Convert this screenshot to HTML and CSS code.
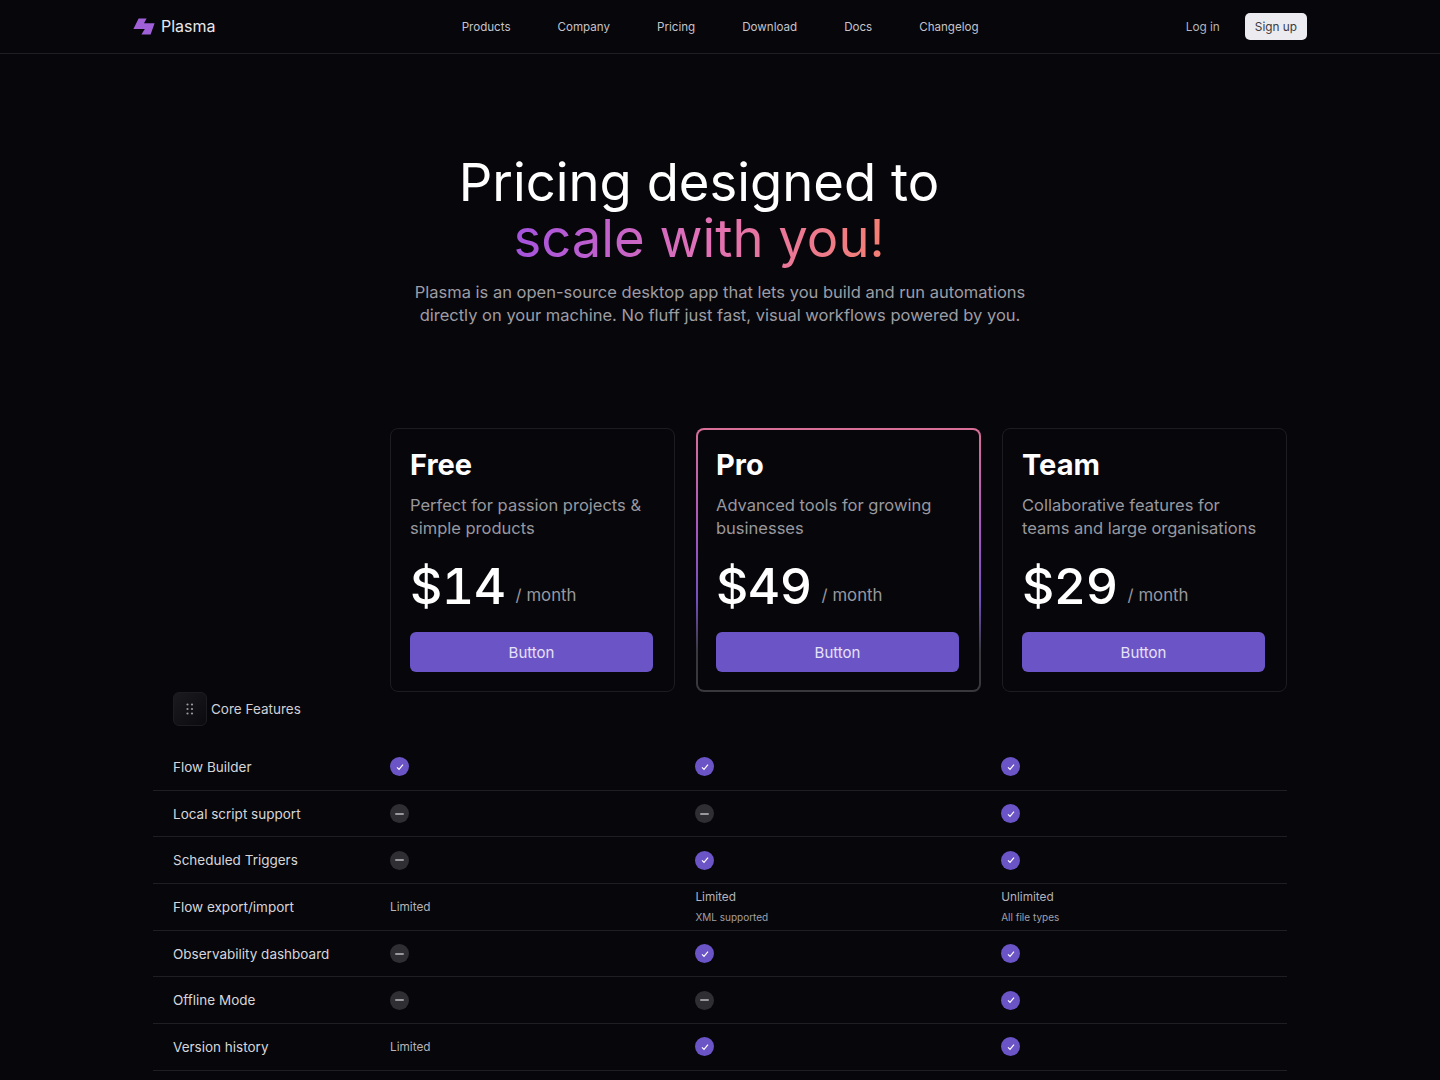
FILE: index.html
```html
<!DOCTYPE html>
<html lang="en">
<head>
  <meta charset="UTF-8">
  <meta name="viewport" content="width=device-width, initial-scale=1.0">
  <title>Plasma - Pricing</title>
  <link rel="stylesheet" href="styles.css">
</head>
<body>
  <header class="topbar">
    <div class="topbar-inner">
      <a class="brand" href="#">
        <svg class="brand-icon" width="22" height="17" viewBox="0 0 22 17"><path d="M5.6 0.5h8l-2.6 4.7h10.6l-4 11.3H8.4l3.4-5.6H0.4z" fill="#9f60d8"/></svg>
        <span>Plasma</span>
      </a>
      <nav class="nav-links">
        <a href="#">Products</a>
        <a href="#">Company</a>
        <a href="#">Pricing</a>
        <a href="#">Download</a>
        <a href="#">Docs</a>
        <a href="#">Changelog</a>
      </nav>
      <div class="auth">
        <a href="#" class="login">Log in</a>
        <a href="#" class="signup">Sign up</a>
      </div>
    </div>
  </header>

  <section class="hero">
    <h1><span class="line">Pricing designed to</span><span class="line gradient-text">scale with you!</span></h1>
    <p>Plasma is an open-source desktop app that lets you build and run automations<br>directly on your machine. No fluff just fast, visual workflows powered by you.</p>
  </section>

  <section class="plans">
    <div class="card">
      <h2>Free</h2>
      <p class="desc">Perfect for passion projects &amp; simple products</p>
      <div class="price"><span class="amount">$14</span><span class="period">/ month</span></div>
      <button class="buy">Button</button>
    </div>
    <div class="card card-pro">
      <h2>Pro</h2>
      <p class="desc">Advanced tools for growing businesses</p>
      <div class="price"><span class="amount">$49</span><span class="period">/ month</span></div>
      <button class="buy">Button</button>
    </div>
    <div class="card">
      <h2>Team</h2>
      <p class="desc">Collaborative features for teams and large organisations</p>
      <div class="price"><span class="amount">$29</span><span class="period">/ month</span></div>
      <button class="buy">Button</button>
    </div>
  </section>

  <section class="features">
    <div class="features-head">
      <span class="head-icon">
        <svg width="8" height="12" viewBox="0 0 8 12" fill="#9a9aa1"><circle cx="1.5" cy="1.5" r="1.1"/><circle cx="6" cy="1.5" r="1.1"/><circle cx="1.5" cy="6" r="1.1"/><circle cx="6" cy="6" r="1.1"/><circle cx="1.5" cy="10.5" r="1.1"/><circle cx="6" cy="10.5" r="1.1"/></svg>
      </span>
      <span>Core Features</span>
    </div>

    <div class="row">
      <div class="name">Flow Builder</div>
      <div class="cell"><span class="yes"><svg width="10" height="10" viewBox="0 0 10 10"><path d="M2 5.4l2 2L8 2.6" /></svg></span></div>
      <div class="cell"><span class="yes"><svg width="10" height="10" viewBox="0 0 10 10"><path d="M2 5.4l2 2L8 2.6" /></svg></span></div>
      <div class="cell"><span class="yes"><svg width="10" height="10" viewBox="0 0 10 10"><path d="M2 5.4l2 2L8 2.6" /></svg></span></div>
    </div>
    <div class="row">
      <div class="name">Local script support</div>
      <div class="cell"><span class="no"></span></div>
      <div class="cell"><span class="no"></span></div>
      <div class="cell"><span class="yes"><svg width="10" height="10" viewBox="0 0 10 10"><path d="M2 5.4l2 2L8 2.6" /></svg></span></div>
    </div>
    <div class="row">
      <div class="name">Scheduled Triggers</div>
      <div class="cell"><span class="no"></span></div>
      <div class="cell"><span class="yes"><svg width="10" height="10" viewBox="0 0 10 10"><path d="M2 5.4l2 2L8 2.6" /></svg></span></div>
      <div class="cell"><span class="yes"><svg width="10" height="10" viewBox="0 0 10 10"><path d="M2 5.4l2 2L8 2.6" /></svg></span></div>
    </div>
    <div class="row">
      <div class="name">Flow export/import</div>
      <div class="cell"><span class="limit">Limited</span></div>
      <div class="cell cell-stack"><span class="limit">Limited</span><span class="note">XML supported</span></div>
      <div class="cell cell-stack"><span class="limit">Unlimited</span><span class="note">All file types</span></div>
    </div>
    <div class="row">
      <div class="name">Observability dashboard</div>
      <div class="cell"><span class="no"></span></div>
      <div class="cell"><span class="yes"><svg width="10" height="10" viewBox="0 0 10 10"><path d="M2 5.4l2 2L8 2.6" /></svg></span></div>
      <div class="cell"><span class="yes"><svg width="10" height="10" viewBox="0 0 10 10"><path d="M2 5.4l2 2L8 2.6" /></svg></span></div>
    </div>
    <div class="row">
      <div class="name">Offline Mode</div>
      <div class="cell"><span class="no"></span></div>
      <div class="cell"><span class="no"></span></div>
      <div class="cell"><span class="yes"><svg width="10" height="10" viewBox="0 0 10 10"><path d="M2 5.4l2 2L8 2.6" /></svg></span></div>
    </div>
    <div class="row">
      <div class="name">Version history</div>
      <div class="cell"><span class="limit">Limited</span></div>
      <div class="cell"><span class="yes"><svg width="10" height="10" viewBox="0 0 10 10"><path d="M2 5.4l2 2L8 2.6" /></svg></span></div>
      <div class="cell"><span class="yes"><svg width="10" height="10" viewBox="0 0 10 10"><path d="M2 5.4l2 2L8 2.6" /></svg></span></div>
    </div>
  </section>
</body>
</html>
```

FILE: styles.css
```css
* {
  box-sizing: border-box;
}

body {
  margin: 0;
  height: 1080px;
  overflow: hidden;
  background-color: #07060b;
  color: #fff;
  font-family: Inter, "Noto Sans", sans-serif;
}

a {
  color: inherit;
  text-decoration: none;
}

.topbar {
  height: 54px;
  border-bottom: 1px solid #1e1e23;
}

.topbar-inner {
  width: 1174px;
  height: 100%;
  margin: 0 auto;
  display: flex;
  align-items: center;
  justify-content: space-between;
}

.brand {
  display: flex;
  align-items: center;
  gap: 6px;
  font-size: 16px;
  color: #e8e8ec;
}

.brand span {
  margin-bottom: 2px;
}

.nav-links {
  display: flex;
  gap: 47px;
  font-size: 11.6px;
  color: #c4c4ca;
  margin-left: 39px;
}

.auth {
  display: flex;
  align-items: center;
  gap: 25px;
  font-size: 11.8px;
}

.login {
  color: #b4b4ba;
}

.signup {
  background-color: #ececf0;
  color: #3a3a40;
  padding: 0 10px;
  height: 27px;
  line-height: 28px;
  border-radius: 5px;
}

.hero {
  padding-top: 100px;
  text-align: center;
}

.hero h1 {
  margin: 0;
  padding-right: 42px;
  font-size: 52.6px;
  font-weight: 400;
  color: #fff;
}

/* each heading line is a block so the gradient box stays within its own line */
.line {
  display: block;
  height: 56px;
  line-height: 56px;
}

.gradient-text {
  width: max-content;
  margin: 0 auto -8px;
  height: 64px;
  background: linear-gradient(90deg, #a452de 0%, #e070b8 50%, #f57f72 100%);
  -webkit-background-clip: text;
  background-clip: text;
  color: transparent;
}

.hero p {
  margin: 15px 0 0;
  font-size: 16.5px;
  line-height: 23px;
  color: #9d9da3;
}

.plans {
  display: grid;
  grid-template-columns: repeat(3, 285px);
  gap: 21px;
  margin: 101px 153px 0 390px;
}

.card {
  height: 264px;
  padding: 19px 23px 19px 19px;
  border: 1px solid #1c1c21;
  border-radius: 8px;
}

.card-pro {
  padding: 18px 22px 18px 18px;
  border: 2px solid transparent;
  background: linear-gradient(#07060b, #07060b) padding-box,
    linear-gradient(180deg, #d96f98 0%, #a456c0 40%, #7350bd 65%, #38383d 85%, #38383d 100%) border-box;
}

.card h2 {
  margin: 0;
  font-size: 29px;
  font-weight: 700;
  line-height: 34px;
}

.desc {
  margin: 12px 0 0;
  font-size: 16.5px;
  line-height: 23px;
  color: #98989e;
}

.price {
  display: flex;
  align-items: center;
  margin-top: 16px;
}

.amount {
  font-size: 50px;
  font-weight: 500;
  line-height: 60px;
  letter-spacing: -0.5px;
  font-variant-numeric: tabular-nums;
}

.period {
  margin-left: 10px;
  margin-top: 18px;
  font-size: 16.8px;
  color: #98989e;
}

.buy {
  display: block;
  width: 243px;
  height: 40px;
  margin-top: 16px;
  border: none;
  border-radius: 6px;
  background-color: #6b54c6;
  color: #e6e2f6;
  font-family: inherit;
  font-size: 15px;
}

.features {
  margin: 0 153px;
}

.features-head {
  display: flex;
  align-items: center;
  gap: 4px;
  height: 34px;
  margin-left: 20px;
  font-size: 13.5px;
  color: #d0d0d5;
}

.head-icon {
  width: 34px;
  height: 34px;
  display: flex;
  align-items: center;
  justify-content: center;
  border: 1px solid #1c1c21;
  border-radius: 6px;
  background: linear-gradient(135deg, #1a1a1f, #0b0a0f);
}

.row {
  display: grid;
  grid-template-columns: 237px 305.4px 305.8px 285.8px;
  align-items: center;
  height: 46.7px;
  border-bottom: 1px solid #1e1e23;
}

.features-head + .row {
  margin-top: 18px;
}

.name {
  padding-left: 20px;
  font-size: 13.5px;
  color: #d6d6da;
}

.cell {
  display: flex;
  align-items: center;
}

.cell-stack {
  flex-direction: column;
  align-items: flex-start;
  gap: 5px;
}

.yes,
.no {
  width: 19px;
  height: 19px;
  border-radius: 50%;
  display: flex;
  align-items: center;
  justify-content: center;
}

.yes {
  background-color: #6b54c6;
}

.yes svg path {
  fill: none;
  stroke: #fff;
  stroke-width: 1.2;
}

.no {
  background-color: #2e2e33;
}

.no::before {
  content: "";
  width: 9px;
  height: 2px;
  border-radius: 1px;
  background-color: #98989e;
}

.limit {
  font-size: 11.8px;
  line-height: 15px;
  color: #b4b4ba;
}

.limit:only-child {
  padding-top: 2px;
}

.note {
  font-size: 10px;
  line-height: 14px;
  color: #a0a0a6;
}
```
